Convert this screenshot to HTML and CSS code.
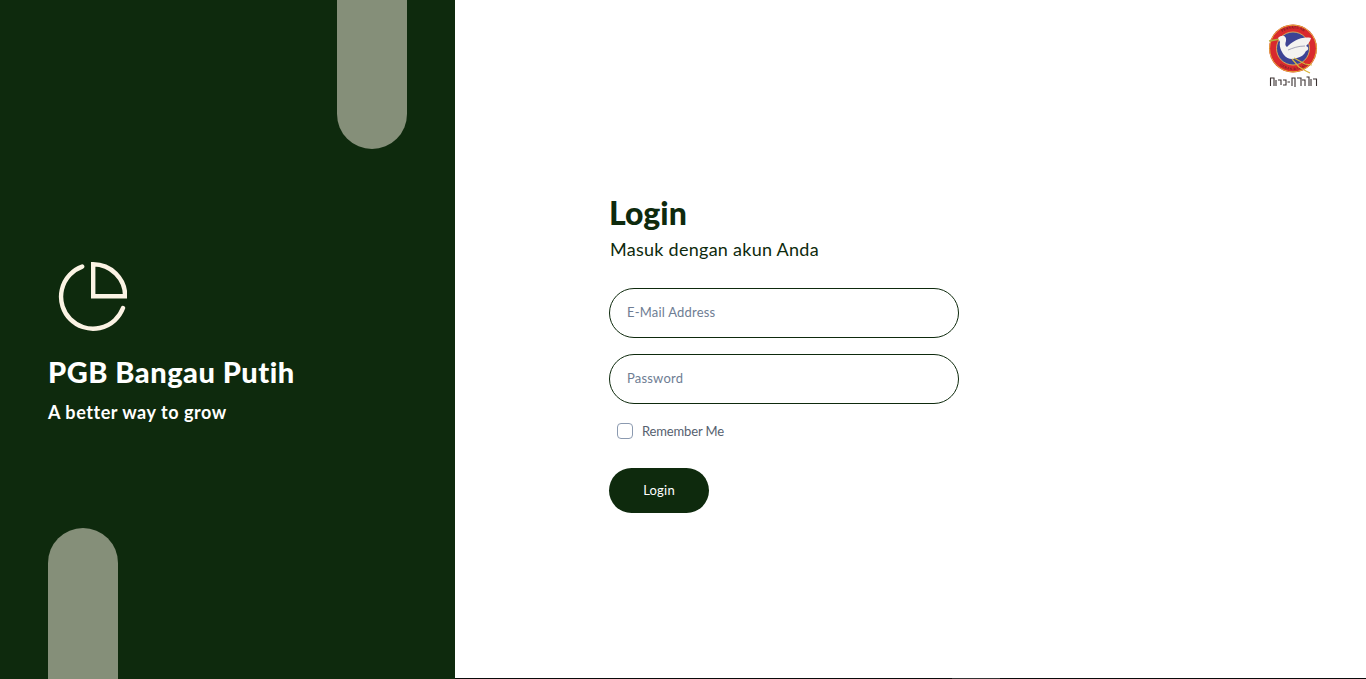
FILE: index.html
```html
<!DOCTYPE html>
<html lang="id">
<head>
<meta charset="utf-8">
<title>Login</title>
<link rel="stylesheet" href="styles.css">
</head>
<body>
<div class="page">
  <aside class="side">
    <div class="pill pill-top"></div>
    <div class="brand">
      <svg class="brand-icon" viewBox="0 0 70 70" width="70" height="70" fill="none" stroke="#fbf3e4" stroke-width="4.4" stroke-linecap="round" stroke-linejoin="miter">
        <path d="M25.2 4.6 A32 32 0 1 0 66 46"/>
        <path d="M36.2 2.2 A32 32 0 0 1 68.2 34.2 H36.2 Z"/>
      </svg>
      <h1 class="brand-name">PGB Bangau Putih</h1>
      <p class="brand-tag">A better way to grow</p>
    </div>
    <div class="pill pill-bottom"></div>
  </aside>
  <main class="main">
    <svg class="logo" viewBox="0 0 50 66" width="50" height="66">
      <defs>
        <path id="ring-top" d="M5 24.5 A20 20 0 0 1 45 24.5"/>
        <path id="ring-bottom" d="M3.5 24.5 A21.5 21.5 0 0 0 46.5 24.5"/>
      </defs>
      <circle cx="25" cy="24.5" r="24" fill="#d92a2e"/>
      <circle cx="25" cy="24.5" r="23.4" fill="none" stroke="#e4b43c" stroke-width="1"/>
      <circle cx="25" cy="24.5" r="16.5" fill="#3d4394" stroke="#e9c65a" stroke-width="0.8"/>
      <text class="logo-ring"><textPath href="#ring-top" startOffset="50%">PERSATUAN</textPath></text>
      <text class="logo-ring"><textPath href="#ring-bottom" startOffset="50%">GERAK BADAN</textPath></text>
      <path d="M1 17 L12 15" stroke="#b5b13c" stroke-width="1.6" fill="none"/>
      <path d="M10 14 C14 10 19 12 18 17 C17 20 17 22 19 23 C24 18 33 12 43 14 C42 18 40 20 38 22 C41 23 41 26 38 27 C36 31 33 33 29 34 C24 36 19 35 16 31 C13 27 11 22 12 18 Z" fill="#f4f3f0"/>
      <path d="M20 26 C25 24 30 22 37 22" stroke="#8f90a8" stroke-width="0.8" fill="none"/>
      <path d="M26 34 L37 40 L44 41 M24 35 L31 43 L38 47 L42 49" fill="none" stroke="#d9b63c" stroke-width="1.2"/>
      <path class="logo-script" d="M2.5 62 V54 H6 V62 M8 62 V56 M10 56 H13 V61 M15 56 H18 V61 H15 M19.5 58 H22 M24 62 V54 H27 V63 M29 54 H33 V62 M34 56 H37 V62 M38.5 53 H41 V62 M43 55 V62 M45 55 H48.5 V62"/>
    </svg>
    <form class="login">
      <h2 class="login-title">Login</h2>
      <p class="login-sub">Masuk dengan akun Anda</p>
      <input class="field field-first" type="email" placeholder="E-Mail Address">
      <input class="field" type="password" placeholder="Password">
      <label class="remember"><span class="check"></span><span class="remember-text">Remember Me</span></label>
      <button class="submit" type="button">Login</button>
    </form>
  </main>
</div>
<div class="bottom-line"><span class="line-glint"></span></div>
</body>
</html>
```
FILE: styles.css
```css
* { box-sizing: border-box; }
html, body { margin: 0; height: 679px; overflow: hidden; background: #fff; }
body {
  font-family: "Lato", "Noto Sans", sans-serif;
  font-variant-ligatures: none;
  display: flex;
  flex-direction: column;
}
.page { display: flex; height: 678px; }
.side {
  width: 455px;
  height: 679px;
  flex: none;
  background: #0e2a0d;
  padding: 0 48px;
  display: flex;
  flex-direction: column;
  position: relative;
}
.pill { width: 70px; background: #858f79; position: absolute; }
.pill-top { left: 337px; top: 0; height: 149px; border-radius: 0 0 35px 35px; }
.pill-bottom { left: 48px; top: 528px; height: 151px; border-radius: 35px 35px 0 0; }
.brand { margin-top: 262px; }
.brand-icon { display: block; margin-left: 9px; }
.brand-name { margin: 21px 0 0; color: #fff; font-size: 29px; line-height: 38px; font-weight: 900; letter-spacing: 0.5px; white-space: nowrap; }
.brand-tag { margin: 9px 0 0; color: #fff; font-size: 18px; line-height: 24px; font-weight: 700; letter-spacing: 0.55px; white-space: nowrap; }
.main { flex: 1; position: relative; padding: 195px 0 0 154px; }
.logo { position: absolute; right: 48px; top: 24px; }
.logo-ring { font-family: "Liberation Serif", serif; font-size: 3.6px; fill: #3a1a20; text-anchor: middle; letter-spacing: 0.3px; }
.logo-script { fill: none; stroke: #3a3030; stroke-width: 1.1; }
.login { width: 350px; display: flex; flex-direction: column; align-items: flex-start; }
.login-title { margin: 0; color: #0e2a0d; font-size: 32px; line-height: 36px; font-weight: 900; }
.login-sub { margin: 5px 0 0 1px; color: #0e2a0d; font-size: 18px; line-height: 27px; letter-spacing: 0.27px; }
.field {
  display: block;
  width: 350px;
  height: 50px;
  border: 1px solid #0e2a0d;
  border-radius: 25px;
  padding: 0 17px 3px;
  margin-top: 16px;
  background: #fff;
  font-family: inherit;
  font-size: 13px;
  letter-spacing: 0.2px;
  color: #6e7d93;
  outline: none;
}
.field-first { margin-top: 25px; }
.field::placeholder { color: #6e7d93; opacity: 1; }
.remember { display: flex; align-items: center; gap: 9px; margin: 19px 0 0 8px; height: 16px; color: #56616f; font-size: 13px; }
.remember-text { letter-spacing: -0.15px; }
.check { width: 16px; height: 16px; border: 1px solid #8b9ab0; border-radius: 4px; background: #fff; }
.submit {
  margin-top: 29px;
  width: 100px;
  height: 45px;
  padding: 0 0 2px;
  border: 0;
  border-radius: 23px;
  background: #0e2a0d;
  color: #fff;
  font-family: inherit;
  font-size: 13px;
  letter-spacing: 0.2px;
}
.bottom-line { height: 1px; margin-left: 455px; background: #0a0a0a; position: relative; z-index: 1; }
.line-glint { display: block; width: 48px; height: 1px; margin-left: 497px; background: #333; }
```
